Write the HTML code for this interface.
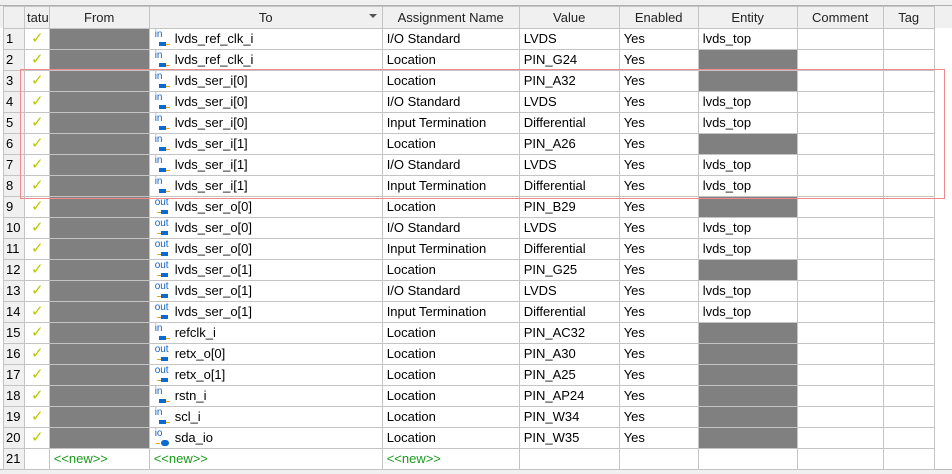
<!DOCTYPE html>
<html><head><meta charset="utf-8"><style>
body{margin:0;width:952px;height:473px;background:#fff;overflow:hidden;font-family:"Liberation Sans",sans-serif;font-size:13px;position:relative}
#top{position:absolute;left:0;top:0;width:952px;height:6px;background:#f0f0f0;border-bottom:1px solid #b0b0b0;box-sizing:border-box}
#hdrbg{position:absolute;left:0;top:6px;width:952px;height:22px;background:#f0f0f0}
#below{position:absolute;left:0;top:469px;width:952px;height:4px;background:#f0f0f0;border-top:1px solid #b8b8b8}
table{position:absolute;left:3px;top:6px;border-collapse:collapse;table-layout:fixed}
td,th{border:1px solid #c4c4c4;height:20px;padding:0 0 0 4px;white-space:nowrap;overflow:hidden;line-height:20px;font-weight:normal}
th{background:#f0f0f0;text-align:center;height:21px;padding:0;color:#222}
td.n{background:#f0f0f0;padding-left:2px}
td.g{background:#808080}
.ck{color:#b8c800;font-size:15px;padding-left:6px}
.nw{color:#1a9a1a}
.ic{display:inline-block;position:relative;width:21px;height:20px;vertical-align:top}
.ic i{position:absolute;left:1px;top:1px;font-style:normal;font-size:10px;line-height:10px;color:#1060c0}
.ic b{position:absolute;top:13px;width:7px;height:4px;background:#0a6ad0}
.ic u{position:absolute;top:15px;width:4px;height:1px;background:#f0a020}
.in b{left:5px}.in u{left:12px}
.out b{left:7px}.out u{left:3px}
.io b{left:7px;top:12px;width:8px;height:6px;border-radius:3px}.io u{left:2px}
#red{position:absolute;left:20px;top:69px;width:925px;height:130px;border:1.5px solid #f08a8a;box-sizing:border-box}
.arr{position:absolute;left:369px;top:14px;width:0;height:0;border-left:4px solid transparent;border-right:4px solid transparent;border-top:4px solid #555}
</style></head><body>
<div id="top"></div><div id="hdrbg"></div><div id="below"></div>
<table>
<colgroup><col style="width:21px"><col style="width:24px"><col style="width:100px"><col style="width:233px"><col style="width:137px"><col style="width:100px"><col style="width:79px"><col style="width:99px"><col style="width:86px"><col style="width:51px"></colgroup>
<tr><th></th><th style="text-align:left;padding-left:2px">tatu</th><th>From</th><th>To</th><th>Assignment Name</th><th>Value</th><th>Enabled</th><th>Entity</th><th>Comment</th><th>Tag</th></tr>
<tr><td class="n">1</td><td class="ck">✓</td><td class="g"></td><td><span class="ic in"><i>in</i><b></b><u></u></span>lvds_ref_clk_i</td><td>I/O Standard</td><td>LVDS</td><td>Yes</td><td>lvds_top</td><td></td><td></td></tr>
<tr><td class="n">2</td><td class="ck">✓</td><td class="g"></td><td><span class="ic in"><i>in</i><b></b><u></u></span>lvds_ref_clk_i</td><td>Location</td><td>PIN_G24</td><td>Yes</td><td class="g"></td><td></td><td></td></tr>
<tr><td class="n">3</td><td class="ck">✓</td><td class="g"></td><td><span class="ic in"><i>in</i><b></b><u></u></span>lvds_ser_i[0]</td><td>Location</td><td>PIN_A32</td><td>Yes</td><td class="g"></td><td></td><td></td></tr>
<tr><td class="n">4</td><td class="ck">✓</td><td class="g"></td><td><span class="ic in"><i>in</i><b></b><u></u></span>lvds_ser_i[0]</td><td>I/O Standard</td><td>LVDS</td><td>Yes</td><td>lvds_top</td><td></td><td></td></tr>
<tr><td class="n">5</td><td class="ck">✓</td><td class="g"></td><td><span class="ic in"><i>in</i><b></b><u></u></span>lvds_ser_i[0]</td><td>Input Termination</td><td>Differential</td><td>Yes</td><td>lvds_top</td><td></td><td></td></tr>
<tr><td class="n">6</td><td class="ck">✓</td><td class="g"></td><td><span class="ic in"><i>in</i><b></b><u></u></span>lvds_ser_i[1]</td><td>Location</td><td>PIN_A26</td><td>Yes</td><td class="g"></td><td></td><td></td></tr>
<tr><td class="n">7</td><td class="ck">✓</td><td class="g"></td><td><span class="ic in"><i>in</i><b></b><u></u></span>lvds_ser_i[1]</td><td>I/O Standard</td><td>LVDS</td><td>Yes</td><td>lvds_top</td><td></td><td></td></tr>
<tr><td class="n">8</td><td class="ck">✓</td><td class="g"></td><td><span class="ic in"><i>in</i><b></b><u></u></span>lvds_ser_i[1]</td><td>Input Termination</td><td>Differential</td><td>Yes</td><td>lvds_top</td><td></td><td></td></tr>
<tr><td class="n">9</td><td class="ck">✓</td><td class="g"></td><td><span class="ic out"><i>out</i><b></b><u></u></span>lvds_ser_o[0]</td><td>Location</td><td>PIN_B29</td><td>Yes</td><td class="g"></td><td></td><td></td></tr>
<tr><td class="n">10</td><td class="ck">✓</td><td class="g"></td><td><span class="ic out"><i>out</i><b></b><u></u></span>lvds_ser_o[0]</td><td>I/O Standard</td><td>LVDS</td><td>Yes</td><td>lvds_top</td><td></td><td></td></tr>
<tr><td class="n">11</td><td class="ck">✓</td><td class="g"></td><td><span class="ic out"><i>out</i><b></b><u></u></span>lvds_ser_o[0]</td><td>Input Termination</td><td>Differential</td><td>Yes</td><td>lvds_top</td><td></td><td></td></tr>
<tr><td class="n">12</td><td class="ck">✓</td><td class="g"></td><td><span class="ic out"><i>out</i><b></b><u></u></span>lvds_ser_o[1]</td><td>Location</td><td>PIN_G25</td><td>Yes</td><td class="g"></td><td></td><td></td></tr>
<tr><td class="n">13</td><td class="ck">✓</td><td class="g"></td><td><span class="ic out"><i>out</i><b></b><u></u></span>lvds_ser_o[1]</td><td>I/O Standard</td><td>LVDS</td><td>Yes</td><td>lvds_top</td><td></td><td></td></tr>
<tr><td class="n">14</td><td class="ck">✓</td><td class="g"></td><td><span class="ic out"><i>out</i><b></b><u></u></span>lvds_ser_o[1]</td><td>Input Termination</td><td>Differential</td><td>Yes</td><td>lvds_top</td><td></td><td></td></tr>
<tr><td class="n">15</td><td class="ck">✓</td><td class="g"></td><td><span class="ic in"><i>in</i><b></b><u></u></span>refclk_i</td><td>Location</td><td>PIN_AC32</td><td>Yes</td><td class="g"></td><td></td><td></td></tr>
<tr><td class="n">16</td><td class="ck">✓</td><td class="g"></td><td><span class="ic out"><i>out</i><b></b><u></u></span>retx_o[0]</td><td>Location</td><td>PIN_A30</td><td>Yes</td><td class="g"></td><td></td><td></td></tr>
<tr><td class="n">17</td><td class="ck">✓</td><td class="g"></td><td><span class="ic out"><i>out</i><b></b><u></u></span>retx_o[1]</td><td>Location</td><td>PIN_A25</td><td>Yes</td><td class="g"></td><td></td><td></td></tr>
<tr><td class="n">18</td><td class="ck">✓</td><td class="g"></td><td><span class="ic in"><i>in</i><b></b><u></u></span>rstn_i</td><td>Location</td><td>PIN_AP24</td><td>Yes</td><td class="g"></td><td></td><td></td></tr>
<tr><td class="n">19</td><td class="ck">✓</td><td class="g"></td><td><span class="ic in"><i>in</i><b></b><u></u></span>scl_i</td><td>Location</td><td>PIN_W34</td><td>Yes</td><td class="g"></td><td></td><td></td></tr>
<tr><td class="n">20</td><td class="ck">✓</td><td class="g"></td><td><span class="ic io"><i>io</i><b></b><u></u></span>sda_io</td><td>Location</td><td>PIN_W35</td><td>Yes</td><td class="g"></td><td></td><td></td></tr>
<tr><td class="n">21</td><td></td><td class="nw">&lt;&lt;new&gt;&gt;</td><td class="nw">&lt;&lt;new&gt;&gt;</td><td class="nw">&lt;&lt;new&gt;&gt;</td><td></td><td></td><td></td><td></td><td></td></tr>
</table>
<div class="arr"></div>
<div id="red"></div>
</body></html>
